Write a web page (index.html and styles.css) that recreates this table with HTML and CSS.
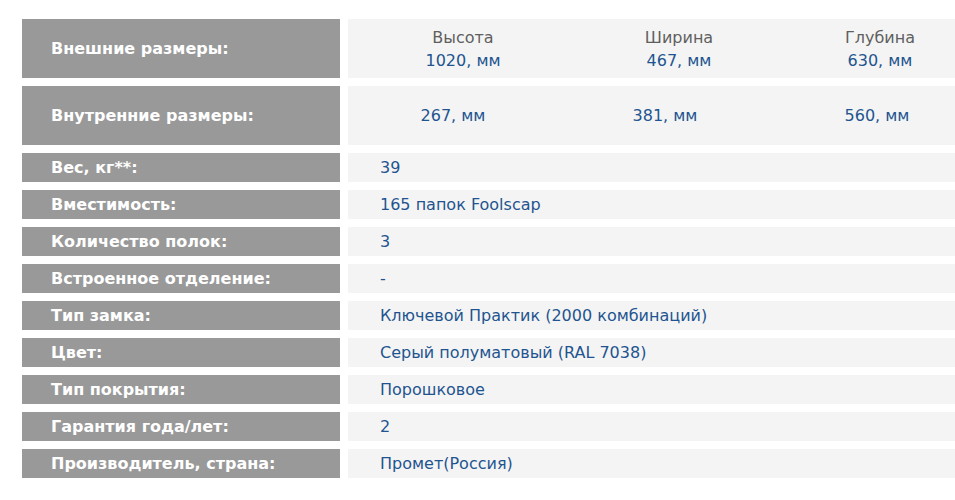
FILE: index.html
```html
<!DOCTYPE html>
<html lang="ru">
<head>
<meta charset="utf-8">
<title>Характеристики</title>
<link rel="stylesheet" href="styles.css">
</head>
<body>
<div class="specs">
  <div class="row tall">
    <div class="label">Внешние размеры:</div>
    <div class="value dims dims-outer">
      <div class="dim"><span class="dim-name">Высота</span><span class="dim-val">1020, мм</span></div>
      <div class="dim"><span class="dim-name">Ширина</span><span class="dim-val">467, мм</span></div>
      <div class="dim"><span class="dim-name">Глубина</span><span class="dim-val">630, мм</span></div>
    </div>
  </div>
  <div class="row tall">
    <div class="label">Внутренние размеры:</div>
    <div class="value dims dims-inner">
      <div class="dim"><span class="dim-val">267, мм</span></div>
      <div class="dim"><span class="dim-val">381, мм</span></div>
      <div class="dim"><span class="dim-val">560, мм</span></div>
    </div>
  </div>
  <div class="row"><div class="label">Вес, кг**:</div><div class="value">39</div></div>
  <div class="row"><div class="label">Вместимость:</div><div class="value">165 папок Foolscap</div></div>
  <div class="row"><div class="label">Количество полок:</div><div class="value">3</div></div>
  <div class="row"><div class="label">Встроенное отделение:</div><div class="value">-</div></div>
  <div class="row"><div class="label">Тип замка:</div><div class="value">Ключевой Практик (2000 комбинаций)</div></div>
  <div class="row"><div class="label">Цвет:</div><div class="value">Серый полуматовый (RAL 7038)</div></div>
  <div class="row"><div class="label">Тип покрытия:</div><div class="value">Порошковое</div></div>
  <div class="row"><div class="label">Гарантия года/лет:</div><div class="value">2</div></div>
  <div class="row"><div class="label">Производитель, страна:</div><div class="value">Промет(Россия)</div></div>
</div>
</body>
</html>
```

FILE: styles.css
```css
html, body {
  margin: 0;
  padding: 0;
  background: #ffffff;
}

body {
  font-family: "DejaVu Sans", Verdana, sans-serif;
  font-size: 16px;
  overflow: hidden;
}

.specs {
  display: flex;
  flex-direction: column;
  gap: 8px;
  padding: 19px 0 0 22px;
  width: 933px;
}

.row {
  display: grid;
  grid-template-columns: 318px 1fr;
  column-gap: 8px;
  height: 29px;
}

.row.tall {
  height: 59px;
}

.label {
  background: #999999;
  color: #ffffff;
  font-weight: bold;
  padding-left: 29px;
  display: flex;
  align-items: center;
  white-space: nowrap;
}

.value {
  background: #f4f4f4;
  color: #1f5490;
  padding-left: 32px;
  display: flex;
  align-items: center;
  white-space: nowrap;
}

.dims {
  padding-left: 0;
  display: grid;
  align-items: center;
  overflow: hidden;
}

.dims-outer {
  grid-template-columns: 230px 202px 200px;
}

.dims-inner {
  grid-template-columns: 210px 214px 210px;
}

.dim {
  display: flex;
  flex-direction: column;
  align-items: center;
  line-height: 23px;
}

.dim-name {
  color: #5f5f5f;
}

.dim-val {
  color: #1f5490;
}
```
